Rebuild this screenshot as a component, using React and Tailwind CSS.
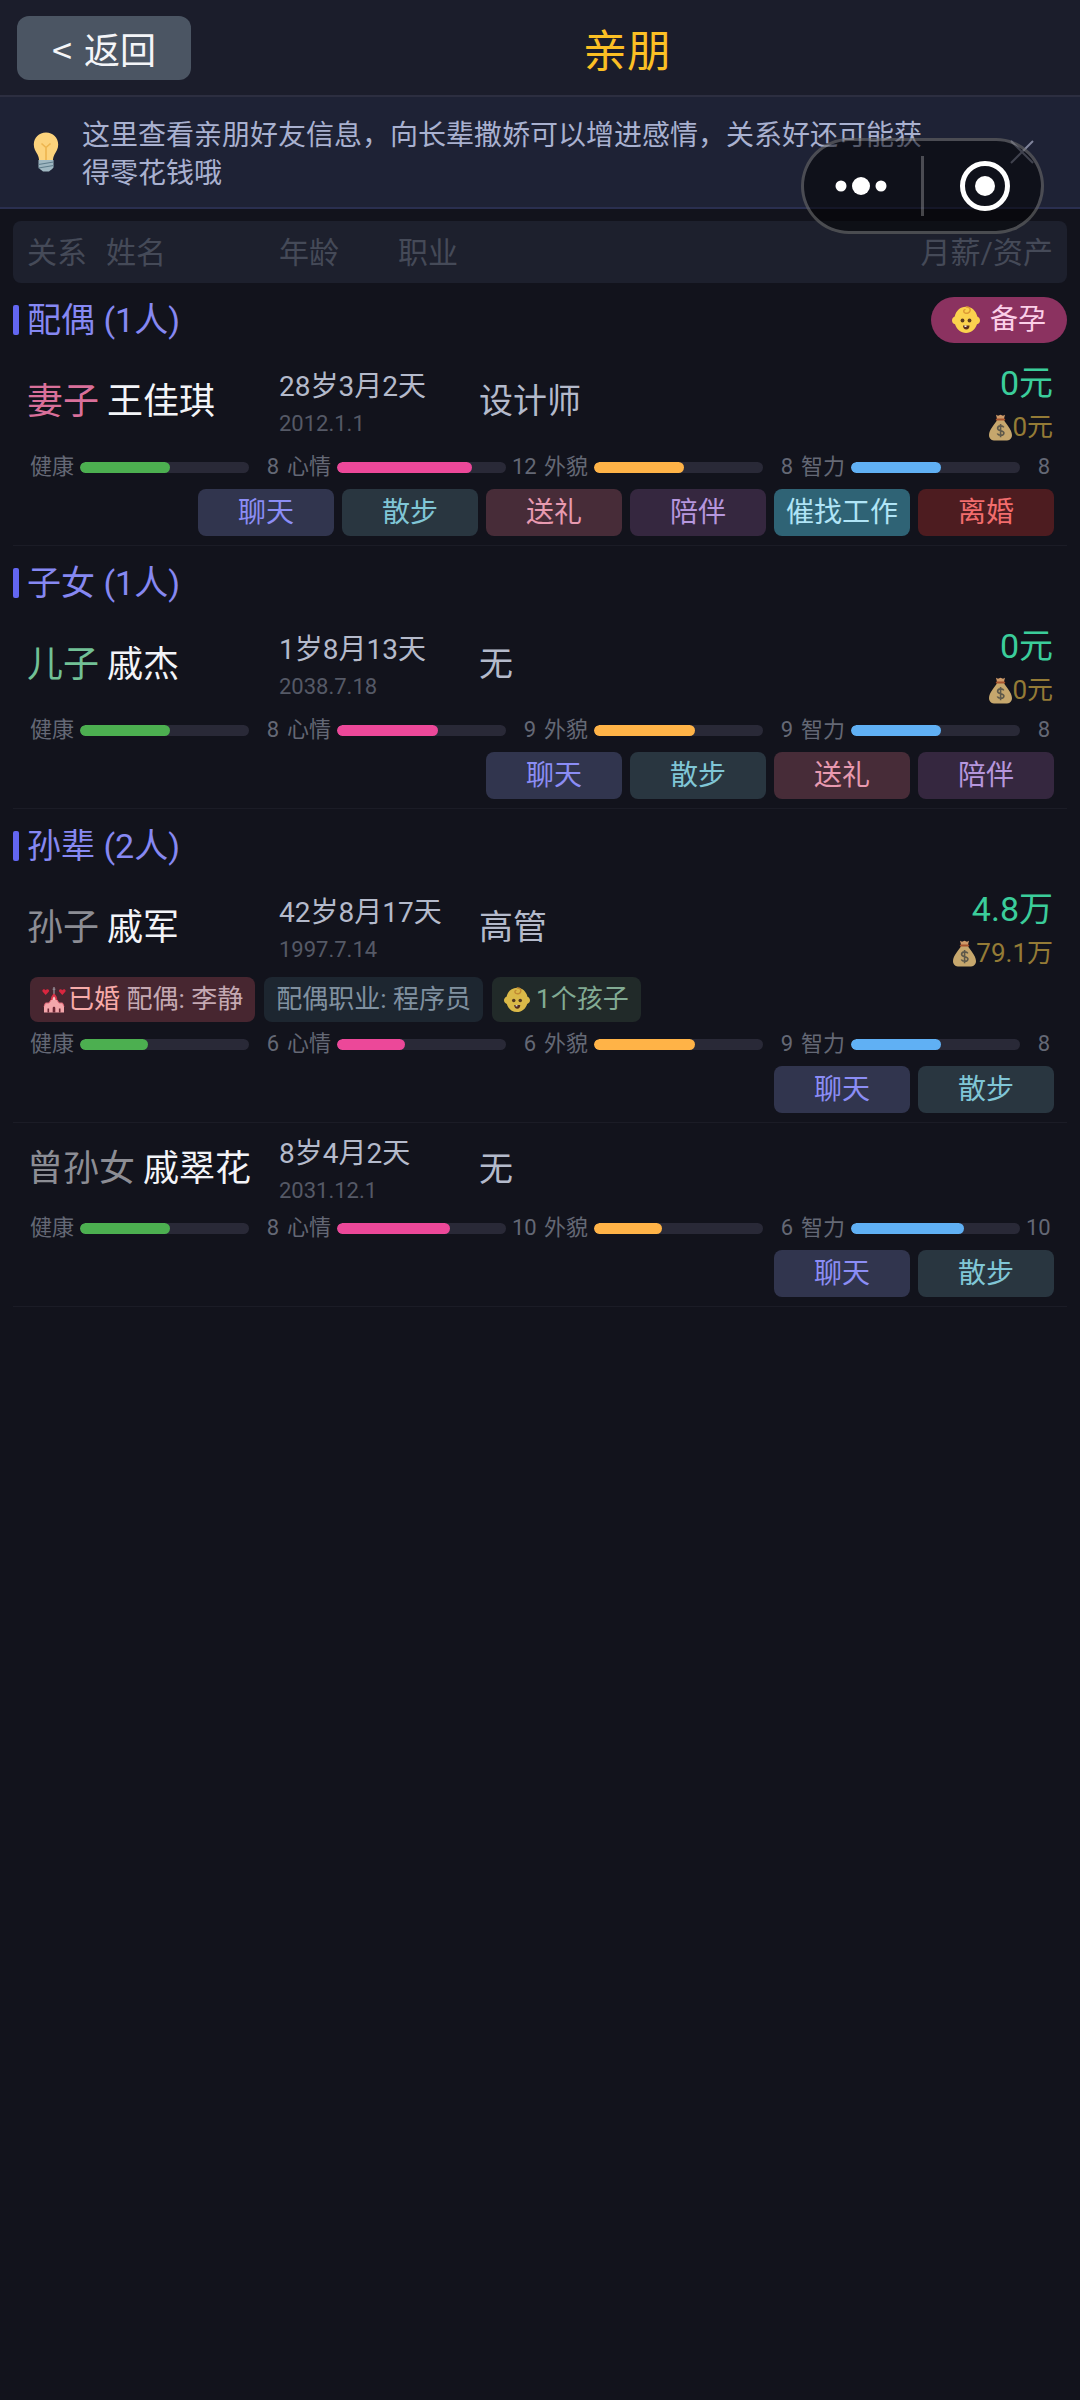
import React from 'react';

const STAT_MAX = 15;

const STATS = [
  { key: 'health', label: '健康', bar: 'bg-[#4caf50]' },
  { key: 'mood', label: '心情', bar: 'bg-[#ec4899]' },
  { key: 'looks', label: '外貌', bar: 'bg-[#ffb347]' },
  { key: 'wit', label: '智力', bar: 'bg-[#60b0f4]' },
];

const ACTION_STYLE = {
  聊天: 'bg-[#31354e] text-[#8b8df5]',
  散步: 'bg-[#293640] text-[#80c6d6]',
  送礼: 'bg-[#472c38] text-[#e89ab0]',
  陪伴: 'bg-[#35273f] text-[#b596dd]',
  催找工作: 'bg-[#2f6375] text-[#b0e4f6]',
  离婚: 'bg-[#4d1c20] text-[#f26d6d]',
};

const GROUPS = [
  {
    title: '配偶',
    canConceive: true,
    people: [
      {
        relation: '妻子', relationClass: 'text-[#d9709a]', name: '王佳琪', age: '28岁3月2天', born: '2012.1.1',
        job: '设计师', salary: '0元', assets: '0元',
        stats: { health: 8, mood: 12, looks: 8, wit: 8 },
        actions: ['聊天', '散步', '送礼', '陪伴', '催找工作', '离婚'],
      },
    ],
  },
  {
    title: '子女',
    people: [
      {
        relation: '儿子', relationClass: 'text-[#72c196]', name: '戚杰', age: '1岁8月13天', born: '2038.7.18',
        job: '无', salary: '0元', assets: '0元',
        stats: { health: 8, mood: 9, looks: 9, wit: 8 },
        actions: ['聊天', '散步', '送礼', '陪伴'],
      },
    ],
  },
  {
    title: '孙辈',
    people: [
      {
        relation: '孙子', relationClass: 'text-[#8c8d94]', name: '戚军', age: '42岁8月17天', born: '1997.7.14',
        job: '高管', salary: '4.8万', assets: '79.1万',
        spouse: '李静', spouseJob: '程序员', children: 1,
        stats: { health: 6, mood: 6, looks: 9, wit: 8 },
        actions: ['聊天', '散步'],
      },
      {
        relation: '曾孙女', relationClass: 'text-[#8c8d94]', name: '戚翠花', age: '8岁4月2天', born: '2031.12.1',
        job: '无',
        stats: { health: 8, mood: 10, looks: 6, wit: 10 },
        actions: ['聊天', '散步'],
      },
    ],
  },
];

function BulbIcon() {
  return (
    <svg viewBox="0 0 26 40" className="h-10 w-[26px] shrink-0" aria-hidden="true">
      <path d="M13 0.5C6 0.5 0.8 5.800.8 12.500c0 4.500 2 7 3.700 10 1.200 2.200 1.500 4.500 1.700 6.500h13.600c.2-2 .5-4.300 1.700-6.500 1.700-3 3.700-5.500 3.700-10C25.200 5.800 20 .5 13 .5z" fill="#fcd37c" />
      <path d="M8.500 11.500l4.500 4 4.500-4M13 15.500V28" fill="none" stroke="#edb54f" strokeWidth="1.600" />
      <path d="M5.500 28h15v7.500c-1.500 2-3 2.500-4.500 4h-6c-1.500-1.500-3-2-4.500-4z" fill="#9fb7c1" />
      <path d="M5.500 32.500l15-2.500M5.500 36l15-2.500" stroke="#5f7d8b" strokeWidth="1.200" />
    </svg>
  );
}

function BabyIcon({ className }) {
  return (
    <svg viewBox="0 0 28 28" className={className} aria-hidden="true">
      <path d="M14 .8c6 0 10 4.200 11.300 9.600C27 11 28 12.600 28 14.400s-1.200 3.400-3 3.900C23.300 23.500 19.300 27 14 27S4.700 23.500 3 18.300C1.200 17.800 0 16.200 0 14.400s1-3.400 2.700-4C4 5 8 .8 14 .8z" fill="#fbd24e" />
      <path d="M14.500 1c3 0 4 1.800 3.600 3.700-.5 2.300-3.200 3.200-5.200 2.200-1.600-.9-1.500-2.900 0-3.300" fill="none" stroke="#dd9a35" strokeWidth="1.500" strokeLinecap="round" />
      <circle cx="10.500" cy="14.500" r="1.900" fill="#5c3a1e" />
      <circle cx="17.500" cy="14.500" r="1.900" fill="#5c3a1e" />
      <path d="M11 19.500h6.500c0 2.600-1.300 4-3.200 4s-3.300-1.400-3.300-4z" fill="#5c2d1c" />
      <path d="M12.500 19.500h2v1.400h-2z" fill="#fff" />
    </svg>
  );
}

function MoneyBagIcon() {
  return (
    <svg viewBox="0 0 23 27" className="h-[27px] w-[23px]" aria-hidden="true">
      <path d="M7 .8l2 1 2.500-1 2.500 1 2-1-1.200 4.700H8.200z" fill="#cf9a68" />
      <path d="M8 6h7c1.500 3.500 8 9.500 8 15 0 4-3 5.600-6 5.600H6c-3 0-6-1.600-6-5.600C0 15.500 6.500 9.500 8 6z" fill="#c6a76d" />
      <path d="M7.700 5.500h7.600" stroke="#a5532d" strokeWidth="1.800" strokeLinecap="round" />
      <path d="M14.800 13.400c-.7-1.200-2-1.600-3.300-1.500-1.700.1-2.900 1-2.900 2.400 0 3.200 6.300 1.600 6.300 4.700 0 1.500-1.400 2.300-3.200 2.300-1.500 0-2.800-.6-3.400-1.800M11.600 10v13.200" fill="none" stroke="#5d584a" strokeWidth="1.600" />
    </svg>
  );
}

function WeddingIcon() {
  return (
    <svg viewBox="0 0 24 26" className="h-[26px] w-6" aria-hidden="true">
      <path d="M3.700 8L.7 4.800C-.7 2.800 2.300 1.200 3.700 3.300 5.100 1.200 8.100 2.800 6.700 4.800z" fill="#d9263f" />
      <path d="M20.300 8l-3-3.200c-1.400-2 1.600-3.600 3-1.500 1.400-2.100 4.400-.5 3 1.500z" fill="#d9263f" />
      <path d="M12 0v7M10.700 2.300h2.600" stroke="#8f8790" strokeWidth="1.400" />
      <path d="M12 6.500c2 1.500 3.200 3.500 3.400 7H8.600c.2-3.500 1.400-5.500 3.400-7z" fill="#d93448" />
      <path d="M12 9.500c1 .8 1.500 2 1.500 4h-3c0-2 .5-3.200 1.500-4z" fill="#f6c6c6" />
      <path d="M9 13h6l2 3h3.500l1.500 3v6.500H2V19l1.500-3H7z" fill="#f3a6ab" />
      <path d="M2 19.500L3.500 16H7l2-3M22 19.500L20.500 16H17l-2-3" fill="none" stroke="#e4697a" strokeWidth="1" />
      <path d="M10.700 25.500V21c0-1.800 2.600-1.800 2.600 0v4.500zM5.500 21.500h1.600v4H5.500zM16.900 21.500h1.600v4h-1.600z" fill="#6b2635" />
    </svg>
  );
}

function Header() {
  return (
    <header className="flex h-[97px] items-center border-b-2 border-[#2c2e40] bg-[#1b1d2b] px-[17px]">
      <button type="button" className="flex h-16 w-[174px] items-center justify-center gap-3 rounded-xl bg-[#4b5563] text-4xl text-[#f4f5f8]">
        <span>&lt;</span>
        <span>返回</span>
      </button>
      <h1 className="flex-1 text-center text-[44px] text-[#fbbf24]">亲朋</h1>
    </header>
  );
}

function TipBanner() {
  return (
    <div className="flex items-center border-b-2 border-[#2a2f50] bg-[#1e2235] py-[17px] pr-[46px] pl-[33px]">
      <BulbIcon />
      <p className="ml-[23px] flex-1 text-[28px] leading-[38px] text-[#a9b1d0]">
        这里查看亲朋好友信息，向长辈撒娇可以增进感情，关系好还可能获得零花钱哦
      </p>
      <button type="button" aria-label="关闭" className="ml-[68px] text-[#80859c]">
        <svg viewBox="0 0 24 24" className="size-6" fill="none" stroke="currentColor" strokeWidth="2">
          <path d="M1 1l22 22M23 1L1 23" />
        </svg>
      </button>
    </div>
  );
}

function Capsule() {
  return (
    <div className="absolute top-[138px] right-9 flex h-24 w-[243px] items-center rounded-full border-3 border-white/25 bg-black/50">
      <button type="button" aria-label="更多" className="flex flex-1 items-center justify-center pr-1">
        <svg viewBox="0 0 52 20" className="h-5 w-[52px]" fill="#fff">
          <circle cx="6" cy="10" r="5.500" />
          <circle cx="26" cy="10" r="9" />
          <circle cx="46" cy="10" r="5.500" />
        </svg>
      </button>
      <span className="h-[60px] w-[3px] bg-white/25" />
      <button type="button" aria-label="退出" className="flex flex-1 items-center justify-center pl-1">
        <svg viewBox="0 0 52 52" className="size-[52px]">
          <circle cx="26" cy="26" r="22.500" fill="none" stroke="#fff" strokeWidth="5" />
          <circle cx="26" cy="26" r="10" fill="#fff" />
        </svg>
      </button>
    </div>
  );
}

function ColumnHeads() {
  return (
    <div className="mt-3 flex h-[62px] items-center rounded-lg bg-[#1d202d] px-3.5 text-[30px] text-[#454a58]">
      <span className="w-[79px]">关系</span>
      <span className="w-[173px]">姓名</span>
      <span className="w-[119px]">年龄</span>
      <span className="flex-1">职业</span>
      <span>月薪/资产</span>
    </div>
  );
}

function StatBar({ label, bar, value }) {
  return (
    <div className="flex items-center gap-1.5">
      <span>{label}</span>
      <span className="h-[11px] flex-1 overflow-hidden rounded-full bg-[#292937]">
        <span className={`block h-full rounded-full ${bar}`} style={{ width: `${(value / STAT_MAX) * 100}%` }} />
      </span>
      <span className="w-6 text-right">{value}</span>
    </div>
  );
}

function PersonTags({ person }) {
  return (
    <div className="flex gap-[9px] px-[17px] text-[26px]">
      <span className="flex h-[45px] items-center rounded-lg bg-[#472630] px-3 text-[#c5a9b3]">
        <WeddingIcon />
        <span className="ml-0.5 whitespace-pre"><span className="text-[#f7aba9]">已婚</span> 配偶: {person.spouse}</span>
      </span>
      <span className="flex h-[45px] items-center rounded-lg bg-[#1d2630] px-3 text-[#8091a0]">
        配偶职业: {person.spouseJob}
      </span>
      <span className="flex h-[45px] items-center gap-1.5 rounded-lg bg-[#212a29] px-3 text-[#82ab94]">
        <BabyIcon className="size-[26px] opacity-85" />
        {person.children}个孩子
      </span>
    </div>
  );
}

function PersonRow({ person }) {
  return (
    <li className="flex flex-col gap-1.5 border-b border-[#1b1c26] py-[9px]">
      <div className="flex items-center px-3.5">
        <div className="flex w-[252px] gap-2 text-4xl whitespace-nowrap">
          <span className={person.relationClass}>{person.relation}</span>
          <span className="text-[#f3f4f8]">{person.name}</span>
        </div>
        <div className="w-[200px] whitespace-nowrap">
          <p className="text-[28px] leading-11 text-[#b4bacb]">{person.age}</p>
          <p className="text-[22px] leading-[30px] text-[#555966]">{person.born}</p>
        </div>
        <p className="flex-1 text-[34px] text-[#b4bacb]">{person.job}</p>
        {person.salary && (
          <div className="text-right">
            <p className="text-[34px] leading-[51px] text-[#3bcd9b]">{person.salary}</p>
            <p className="flex items-center justify-end text-[26px] leading-9 text-[#947b36]">
              <MoneyBagIcon />
              {person.assets}
            </p>
          </div>
        )}
      </div>
      {person.spouse && <PersonTags person={person} />}
      <div className="grid grid-cols-4 gap-2 px-[17px] text-[22px] leading-8 text-[#646875]">
        {STATS.map((s) => (
          <StatBar key={s.key} label={s.label} bar={s.bar} value={person.stats[s.key]} />
        ))}
      </div>
      <div className="flex justify-end gap-2 px-[13px]">
        {person.actions.map((action) => (
          <button key={action} type="button" className={`h-[47px] w-[136px] rounded-lg text-[28px] ${ACTION_STYLE[action]}`}>
            {action}
          </button>
        ))}
      </div>
    </li>
  );
}

function Group({ group }) {
  return (
    <section>
      <div className="mt-2 flex h-[58px] items-center justify-between">
        <h2 className="flex items-center gap-2 text-[34px] text-[#8688f2]">
          <span className="h-[30px] w-1.5 rounded-xs bg-[#6366f1]" />
          {group.title} ({group.people.length}人)
        </h2>
        {group.canConceive && (
          <button type="button" className="flex h-[46px] w-[136px] items-center justify-center gap-2.5 rounded-full bg-[#8b3260] text-[28px] text-[#fbcfe8]">
            <BabyIcon className="size-7" />
            备孕
          </button>
        )}
      </div>
      <ul>
        {group.people.map((person) => (
          <PersonRow key={person.name} person={person} />
        ))}
      </ul>
    </section>
  );
}

export default function App() {
  return (
    <div className="relative min-h-screen bg-[#12131c] font-['Noto_Sans_CJK_SC',sans-serif]" lang="zh-CN">
      <Header />
      <TipBanner />
      <Capsule />
      <main className="px-[13px] font-[Roboto,'Noto_Sans_CJK_SC',sans-serif]">
        <ColumnHeads />
        {GROUPS.map((group) => (
          <Group key={group.title} group={group} />
        ))}
      </main>
    </div>
  );
}
